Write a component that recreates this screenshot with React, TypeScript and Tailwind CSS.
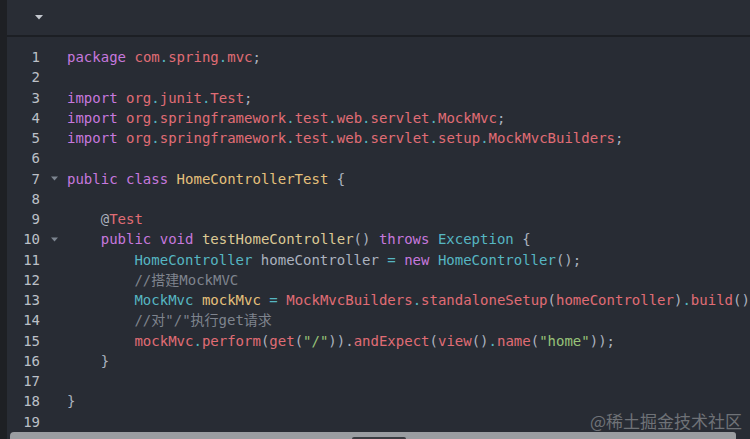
import React from 'react';

// colores del tema (tipo One Dark)
const KW = 'text-[#c678dd]';
const RED = 'text-[#e06c75]';
const TEAL = 'text-[#56b6c2]';
const YEL = 'text-[#e5c07b]';
const FN = 'text-[#dcc994]';
const TXT = 'text-[#abb2bf]';
const CMT = 'text-[#7f848e]';
const STR = 'text-[#98c379]';

type Tok = [string, string];

const lines: { toks: Tok[]; fold?: boolean }[] = [
  { toks: [['package', KW], [' ', TXT], ['com', RED], ['.', TEAL], ['spring', RED], ['.', TEAL], ['mvc', RED], [';', TXT]] },
  { toks: [] },
  { toks: [['import', KW], [' ', TXT], ['org', RED], ['.', TEAL], ['junit', RED], ['.', TEAL], ['Test', RED], [';', TXT]] },
  {
    toks: [
      ['import', KW], [' ', TXT], ['org', RED], ['.', TEAL], ['springframework', RED], ['.', TEAL], ['test', RED], ['.', TEAL],
      ['web', RED], ['.', TEAL], ['servlet', RED], ['.', TEAL], ['MockMvc', RED], [';', TXT],
    ],
  },
  {
    toks: [
      ['import', KW], [' ', TXT], ['org', RED], ['.', TEAL], ['springframework', RED], ['.', TEAL], ['test', RED], ['.', TEAL],
      ['web', RED], ['.', TEAL], ['servlet', RED], ['.', TEAL], ['setup', RED], ['.', TEAL], ['MockMvcBuilders', RED], [';', TXT],
    ],
  },
  { toks: [] },
  { toks: [['public class', KW], [' ', TXT], ['HomeControllerTest', YEL], [' {', TXT]], fold: true },
  { toks: [] },
  { toks: [['    @', TXT], ['Test', RED]] },
  {
    toks: [['    public void', KW], [' ', TXT], ['testHomeController', FN], ['() ', TXT], ['throws', KW], [' ', TXT], ['Exception', TEAL], [' {', TXT]],
    fold: true,
  },
  {
    toks: [
      ['        HomeController', TEAL], [' homeController ', TXT], ['=', TEAL], [' ', TXT], ['new', KW], [' ', TXT],
      ['HomeController', TEAL], ['();', TXT],
    ],
  },
  { toks: [['        //搭建MockMVC', CMT]] },
  {
    toks: [
      ['        MockMvc', TEAL], [' ', TXT], ['mockMvc', YEL], [' ', TXT], ['=', TEAL], [' ', TXT], ['MockMvcBuilders', RED], ['.', TEAL],
      ['standaloneSetup', RED], ['(', TXT], ['homeController', RED], [')', TXT], ['.', TEAL], ['build', RED], ['();', TXT],
    ],
  },
  { toks: [['        //对"/"执行get请求', CMT]] },
  {
    toks: [
      ['        mockMvc', RED], ['.', TEAL], ['perform', RED], ['(', TXT], ['get', RED], ['(', TXT], ['"/"', STR], [')).', TXT],
      ['andExpect', RED], ['(', TXT], ['view', RED], ['()', TXT], ['.', TEAL], ['name', RED], ['(', TXT], ['"home"', STR], ['));', TXT],
    ],
  },
  { toks: [['    }', TXT]] },
  { toks: [] },
  { toks: [['}', TXT]] },
  { toks: [] },
];

function FoldArrow() {
  return (
    <svg width="7" height="5" viewBox="0 0 7 5" className="block">
      <path d="M0 0.5 L7 0.5 L3.5 4.5 Z" fill="#7d8590" />
    </svg>
  );
}

export default function App() {
  return (
    <div className="w-[750px] h-[439px] flex overflow-hidden bg-[#282c34] relative">
      {/* franja oscura izquierda */}
      <div className="w-[7px] h-full bg-[#1e2024] shrink-0" />

      <div className="flex-1 flex flex-col min-w-0">
        {/* cabecera con el desplegable */}
        <div className="h-[37px] shrink-0 flex items-center pl-[28px] border-b-2 border-[#1c1f24] bg-[#292d35]">
          <svg width="8" height="5" viewBox="0 0 8 5">
            <path d="M0 0 L8 0 L4 4.5 Z" fill="#c3c7ce" />
          </svg>
        </div>

        {/* código */}
        <div className="flex-1 pt-[10px] font-['DejaVu_Sans_Mono','Noto_Sans_CJK_SC',monospace] text-[14px] leading-[20.25px] overflow-hidden">
          {lines.map((line, i) => (
            <div key={i} className="flex h-[20.25px] items-center">
              <div className="w-[33px] text-right text-[#bcc0c7] shrink-0">{i + 1}</div>
              <div className="w-[27px] shrink-0 flex justify-center pl-[2px]">{line.fold && <FoldArrow />}</div>
              <div className="whitespace-pre">
                {line.toks.map(([t, c], j) => (
                  <span key={j} className={c}>
                    {t}
                  </span>
                ))}
              </div>
            </div>
          ))}
        </div>
      </div>

      {/* marca de agua */}
      <div className="absolute right-[8px] bottom-[8px] text-[17px] leading-[20px] text-[#6f7277] font-['Noto_Sans_CJK_SC',sans-serif]">
        @稀土掘金技术社区
      </div>

      {/* barra de desplazamiento horizontal */}
      <div className="absolute left-[10px] right-[14px] bottom-0 h-[7px] bg-[#9a9da1] rounded-tl-[4px] rounded-tr-[3px]">
        <div className="absolute left-[342px] w-[54px] bottom-0 h-[2px] bg-[#3a3d42] rounded-t-[2px]" />
      </div>
    </div>
  );
}
